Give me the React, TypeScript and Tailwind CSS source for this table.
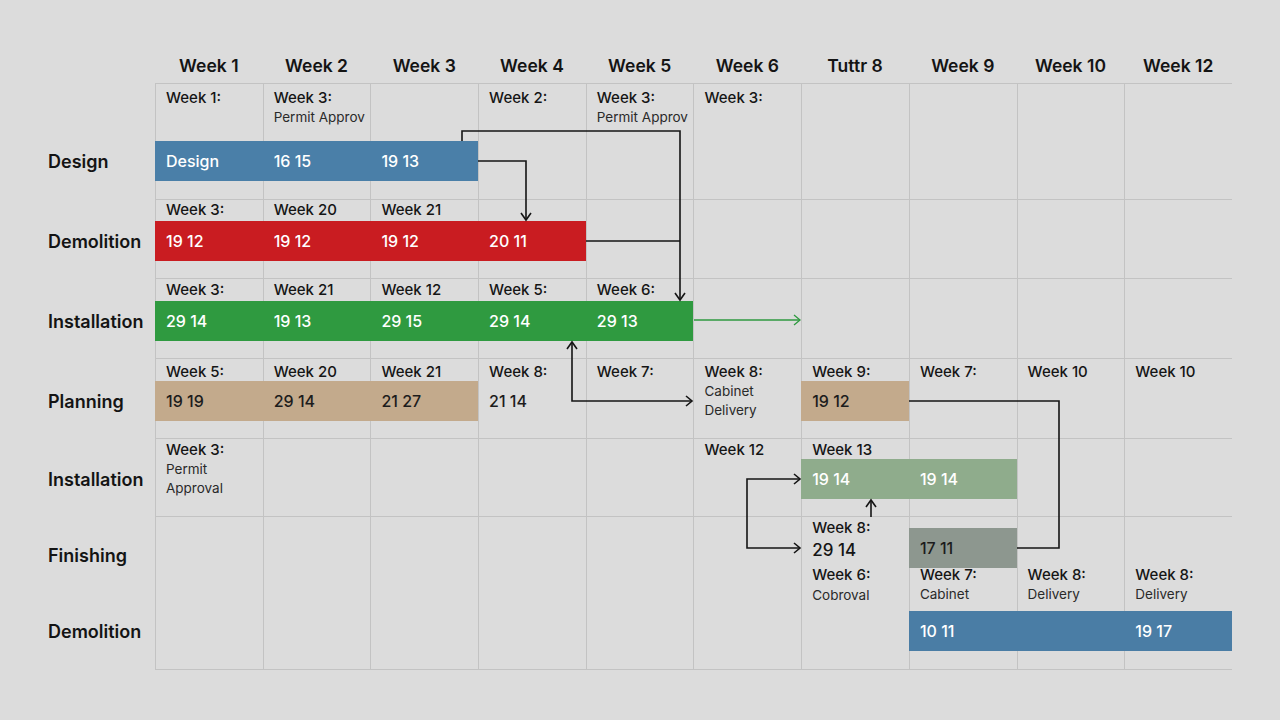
import React from "react";

const colStart = [
  "col-start-2",
  "col-start-3",
  "col-start-4",
  "col-start-5",
  "col-start-6",
  "col-start-7",
  "col-start-8",
  "col-start-9",
  "col-start-10",
  "col-start-11",
];

const weeks = [
  "Week 1",
  "Week 2",
  "Week 3",
  "Week 4",
  "Week 5",
  "Week 6",
  "Tuttr 8",
  "Week 9",
  "Week 10",
  "Week 12",
];

const gridCols = "grid grid-cols-[107px_repeat(10,minmax(0,1fr))]";

function GridLines() {
  return (
    <>
      {colStart.map((c) => (
        <div key={c} className={`${c} row-span-full border-l border-[#c3c3c3]`} />
      ))}
      <div className="col-start-2 col-end-12 row-span-full border-b border-[#c3c3c3]" />
    </>
  );
}

function Label({ col, title, sub, pt }: { col: number; title: string; sub?: string[]; pt: string }) {
  return (
    <div className={`${colStart[col - 1]} row-span-full ${pt} pl-[11px] overflow-hidden`}>
      <div className="text-[15px] leading-5 font-medium text-[#151515] whitespace-nowrap">{title}</div>
      {sub?.map((s) => (
        <div key={s} className="text-[13.5px] leading-[19px] text-[#2a2a2a] whitespace-nowrap">
          {s}
        </div>
      ))}
    </div>
  );
}

function BarText({ col, text, row = "row-start-2", dark }: { col: number; text: string; row?: string; dark?: boolean }) {
  return (
    <div
      className={`${colStart[col - 1]} ${row} flex items-center pl-[11px] text-[16px] font-medium whitespace-nowrap ${
        dark ? "text-[#1c1c1c]" : "text-white"
      }`}
    >
      {text}
    </div>
  );
}

function RowLabel({ text, className }: { text: string; className: string }) {
  return (
    <div className={`col-start-1 ${className} text-[18px] font-semibold text-[#141414]`}>{text}</div>
  );
}

export default function App() {
  return (
    <div className="relative min-h-screen w-full bg-[#dcdcdc] px-12 font-['Inter','Liberation_Sans',sans-serif]">
      {/* header */}
      <div className={`${gridCols} h-[83px] items-end`}>
        <div />
        {weeks.map((w) => (
          <div key={w} className="pb-[5px] text-center text-[17.5px] leading-6 font-semibold text-[#141414]">
            {w}
          </div>
        ))}
      </div>

      <div className="border-t border-[#c3c3c3] ml-[107px]" />

      {/* Design */}
      <div className={`${gridCols} h-[116px] grid-rows-[57px_40px_1fr]`}>
        <GridLines />
        <RowLabel text="Design" className="row-start-2 flex items-center" />
        <Label col={1} title="Week 1:" pt="pt-[4px]" />
        <Label col={2} title="Week 3:" sub={["Permit Approv"]} pt="pt-[4px]" />
        <Label col={4} title="Week 2:" pt="pt-[4px]" />
        <Label col={5} title="Week 3:" sub={["Permit Approv"]} pt="pt-[4px]" />
        <Label col={6} title="Week 3:" pt="pt-[4px]" />
        <div className="col-start-2 col-span-3 row-start-2 bg-[#4a7fa8]" />
        <BarText col={1} text="Design" />
        <BarText col={2} text="16 15" />
        <BarText col={3} text="19 13" />
      </div>

      {/* Demolition */}
      <div className={`${gridCols} h-[79px] grid-rows-[21px_40px_1fr]`}>
        <GridLines />
        <RowLabel text="Demolition" className="row-start-2 flex items-center" />
        <Label col={1} title="Week 3:" pt="pt-0" />
        <Label col={2} title="Week 20" pt="pt-0" />
        <Label col={3} title="Week 21" pt="pt-0" />
        <div className="col-start-2 col-span-4 row-start-2 bg-[#c91c21]" />
        <BarText col={1} text="19 12" />
        <BarText col={2} text="19 12" />
        <BarText col={3} text="19 12" />
        <BarText col={4} text="20 11" />
      </div>

      {/* Installation */}
      <div className={`${gridCols} h-[80px] grid-rows-[22px_40px_1fr]`}>
        <GridLines />
        <RowLabel text="Installation" className="row-start-2 flex items-center" />
        <Label col={1} title="Week 3:" pt="pt-[1px]" />
        <Label col={2} title="Week 21" pt="pt-[1px]" />
        <Label col={3} title="Week 12" pt="pt-[1px]" />
        <Label col={4} title="Week 5:" pt="pt-[1px]" />
        <Label col={5} title="Week 6:" pt="pt-[1px]" />
        <div className="col-start-2 col-span-5 row-start-2 bg-[#2f9a40]" />
        <BarText col={1} text="29 14" />
        <BarText col={2} text="19 13" />
        <BarText col={3} text="29 15" />
        <BarText col={4} text="29 14" />
        <BarText col={5} text="29 13" />
      </div>

      {/* Planning */}
      <div className={`${gridCols} h-[80px] grid-rows-[22px_40px_1fr]`}>
        <GridLines />
        <RowLabel text="Planning" className="row-start-2 flex items-center" />
        <Label col={1} title="Week 5:" pt="pt-[3px]" />
        <Label col={2} title="Week 20" pt="pt-[3px]" />
        <Label col={3} title="Week 21" pt="pt-[3px]" />
        <Label col={4} title="Week 8:" pt="pt-[3px]" />
        <Label col={5} title="Week 7:" pt="pt-[3px]" />
        <Label col={6} title="Week 8:" sub={["Cabinet", "Delivery"]} pt="pt-[3px]" />
        <Label col={7} title="Week 9:" pt="pt-[3px]" />
        <Label col={8} title="Week 7:" pt="pt-[3px]" />
        <Label col={9} title="Week 10" pt="pt-[3px]" />
        <Label col={10} title="Week 10" pt="pt-[3px]" />
        <div className="col-start-2 col-span-3 row-start-2 bg-[#c3aa8c]" />
        <div className="col-start-8 col-span-1 row-start-2 bg-[#c3aa8c]" />
        <BarText col={1} text="19 19" dark />
        <BarText col={2} text="29 14" dark />
        <BarText col={3} text="21 27" dark />
        <BarText col={4} text="21 14" dark />
        <BarText col={7} text="19 12" dark />
      </div>

      {/* Installation */}
      <div className={`${gridCols} h-[78px] grid-rows-[20px_40px_1fr]`}>
        <GridLines />
        <RowLabel text="Installation" className="row-start-2 flex items-center" />
        <Label col={1} title="Week 3:" sub={["Permit", "Approval"]} pt="pt-[1px]" />
        <Label col={6} title="Week 12" pt="pt-[1px]" />
        <Label col={7} title="Week 13" pt="pt-[1px]" />
        <div className="col-start-8 col-span-2 row-start-2 bg-[#8fac8c]" />
        <BarText col={7} text="19 14" />
        <BarText col={8} text="19 14" />
      </div>

      {/* Finishing / Demolition */}
      <div className={`${gridCols} h-[153px] grid-rows-[11px_40px_43px_40px_1fr]`}>
        <GridLines />
        <RowLabel text="Finishing" className="row-span-full pt-[27px] leading-6" />
        <RowLabel text="Demolition" className="row-start-4 flex items-center" />
        <div className="col-start-8 row-span-full pt-[1px] pl-[11px]">
          <div className="text-[15px] leading-5 font-medium text-[#151515]">Week 8:</div>
          <div className="text-[17px] leading-6 font-medium text-[#151515]">29 14</div>
          <div className="mt-[3px] text-[15px] leading-5 font-medium text-[#151515]">Week 6:</div>
          <div className="text-[13.5px] leading-5 text-[#2a2a2a]">Cobroval</div>
        </div>
        <Label col={8} title="Week 7:" sub={["Cabinet"]} pt="pt-[48px]" />
        <Label col={9} title="Week 8:" sub={["Delivery"]} pt="pt-[48px]" />
        <Label col={10} title="Week 8:" sub={["Delivery"]} pt="pt-[48px]" />
        <div className="col-start-9 col-span-1 row-start-2 bg-[#8d978f]" />
        <BarText col={8} text="17 11" dark />
        <div className="col-start-9 col-span-3 row-start-4 bg-[#4a7da5]" />
        <BarText col={8} text="10 11" row="row-start-4" />
        <BarText col={10} text="19 17" row="row-start-4" />
      </div>

      {/* connectors */}
      <svg
        className="pointer-events-none absolute left-0 top-0 h-[720px] w-[1280px]"
        viewBox="0 0 1280 720"
        fill="none"
        stroke="#151515"
        strokeWidth="1.6"
      >
        <path d="M462 141 V131 H680 V299" />
        <path d="M675 293 L680 300 L685 293" />
        <path d="M478 161 H526 V219" />
        <path d="M521 213 L526 220 L531 213" />
        <path d="M586 241 H680" />
        <path d="M694 320 H800" stroke="#2f9a40" strokeWidth="1.3" />
        <path d="M794 315 L800 320 L794 325" stroke="#2f9a40" strokeWidth="1.3" />
        <path d="M572 343 V401 H692" />
        <path d="M567 349 L572 342 L577 349" />
        <path d="M686 396 L692 401 L686 406" />
        <path d="M909 401 H1059 V548 H1017" />
        <path d="M800 479 H747 V548 H800" />
        <path d="M794 474 L800 479 L794 484" />
        <path d="M794 543 L800 548 L794 553" />
        <path d="M871 517 V501" />
        <path d="M866 507 L871 500 L876 507" />
      </svg>
    </div>
  );
}
